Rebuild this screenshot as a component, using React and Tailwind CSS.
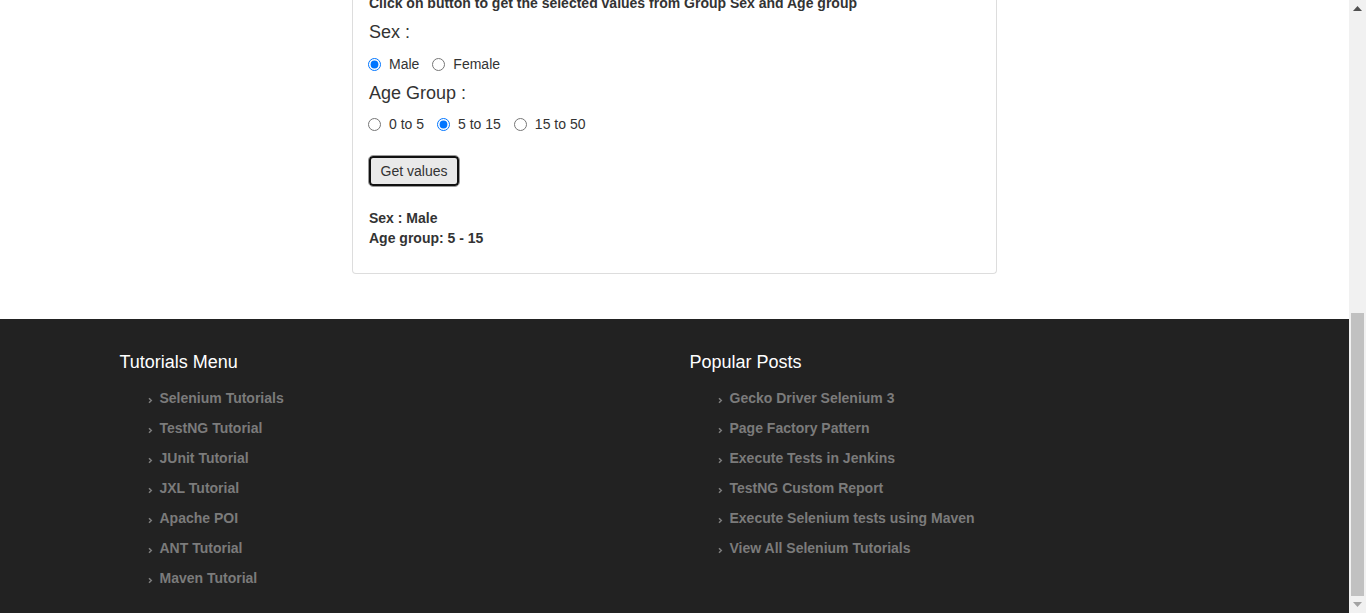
import React from "react";

const tutorials = [
  "Selenium Tutorials",
  "TestNG Tutorial",
  "JUnit Tutorial",
  "JXL Tutorial",
  "Apache POI",
  "ANT Tutorial",
  "Maven Tutorial",
];
const posts = [
  "Gecko Driver Selenium 3",
  "Page Factory Pattern",
  "Execute Tests in Jenkins",
  "TestNG Custom Report",
  "Execute Selenium tests using Maven",
  "View All Selenium Tutorials",
];

function Chevron() {
  return (
    <svg width="5" height="7" viewBox="0 0 5 7" className="shrink-0">
      <path d="M1 1.2 L3.3 3.5 L1 5.8" stroke="#7d7d7d" strokeWidth="1.5" fill="none" />
    </svg>
  );
}

function FooterCol({ title, items }) {
  return (
    <div className="w-[570px] px-[15px]">
      <h3 className="text-[18px] leading-[20px] text-white mt-[33px] mb-[11px]">{title}</h3>
      <ul className="pl-[28px] flex flex-col">
        {items.map((t) => (
          <li key={t} className="h-[30px] flex items-center gap-[7px] text-[14px] font-bold text-[#7b7b7b]">
            <span className="mt-[4px]"><Chevron /></span>
            <span>{t}</span>
          </li>
        ))}
      </ul>
    </div>
  );
}

function Radio({ label, checked, name }) {
  return (
    <label className="flex items-center text-[14px] text-[#333] mr-[13px]">
      <input
        type="radio"
        name={name}
        defaultChecked={checked}
        className="w-[13px] h-[13px] m-0 mr-[8px] accent-[#0075ff]"
      />
      {label}
    </label>
  );
}

export default function App() {
  return (
    <div className="w-[1366px] h-[613px] overflow-hidden flex font-['Liberation_Sans',Arial,sans-serif]">
      <div className="flex-1 flex flex-col">
        <div className="h-[319px] bg-white flex justify-center overflow-hidden">
          <div className="w-[645px] h-[281px] -mt-[7px] border border-t-0 border-[#ddd] rounded-b-[4px] px-[16px] flex flex-col">
            <p className="text-[14px] leading-[20px] font-bold text-[#333]">
              Click on button to get the selected values from Group Sex and Age group
            </p>
            <div className="text-[18px] leading-[27px] text-[#333] mt-[6px]">Sex :</div>
            <div className="flex items-center h-[20px] mt-[8px] -ml-[1px]">
              <Radio name="sex" label="Male" checked />
              <Radio name="sex" label="Female" />
            </div>
            <div className="text-[18px] leading-[27px] text-[#333] mt-[6px]">Age Group :</div>
            <div className="flex items-center h-[20px] mt-[7px] -ml-[1px]">
              <Radio name="age" label="0 to 5" />
              <Radio name="age" label="5 to 15" checked />
              <Radio name="age" label="15 to 50" />
            </div>
            <div className="mt-[22px] flex">
              <button className="w-[90px] h-[30px] bg-[#e9e9e9] border-2 border-[#111] rounded-[4px] outline outline-1 outline-[#9a9a9a] text-[14px] text-[#333]">
                Get values
              </button>
            </div>
            <div className="mt-[22px] text-[14px] leading-[20px] font-bold text-[#333]">
              <div>Sex : Male</div>
              <div>Age group: 5 - 15</div>
            </div>
          </div>
        </div>
        <div className="flex-1 bg-[#222] flex justify-center">
          <div className="w-[1140px] flex">
            <FooterCol title="Tutorials Menu" items={tutorials} />
            <FooterCol title="Popular Posts" items={posts} />
          </div>
        </div>
      </div>
      <div className="w-[17px] bg-[#f1f1f1] flex flex-col items-center">
        <div className="h-[17px] flex items-center justify-center">
          <svg width="9" height="5" viewBox="0 0 9 5"><path d="M0 5 L4.5 0 L9 5 Z" fill="#505050" /></svg>
        </div>
        <div className="h-[296px]" />
        <div className="w-[13px] h-[283px] bg-[#c1c1c1]" />
        <div className="h-[17px] flex items-center justify-center">
          <svg width="9" height="5" viewBox="0 0 9 5"><path d="M0 0 L9 0 L4.5 5 Z" fill="#a3a3a3" /></svg>
        </div>
      </div>
    </div>
  );
}
